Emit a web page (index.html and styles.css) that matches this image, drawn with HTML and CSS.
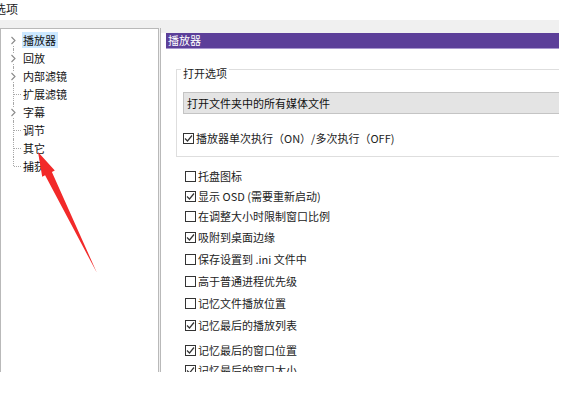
FILE: index.html
```html
<!DOCTYPE html>
<html lang="zh">
<head>
<meta charset="utf-8">
<title>选项</title>
<link rel="stylesheet" href="styles.css">
</head>
<body>
<div class="title">选项</div>
<div class="main">
  <div class="tree">
    <div class="row"><span class="gut first"><svg class="chev" width="7" height="9" viewBox="0 0 7 9"><polyline points="1.5,1 5,4.5 1.5,8" /></svg></span><span class="lbl sel">播放器</span></div>
    <div class="row"><span class="gut"><svg class="chev" width="7" height="9" viewBox="0 0 7 9"><polyline points="1.5,1 5,4.5 1.5,8" /></svg></span><span class="lbl">回放</span></div>
    <div class="row"><span class="gut"><svg class="chev" width="7" height="9" viewBox="0 0 7 9"><polyline points="1.5,1 5,4.5 1.5,8" /></svg></span><span class="lbl">内部滤镜</span></div>
    <div class="row"><span class="gut leaf"></span><span class="lbl">扩展滤镜</span></div>
    <div class="row"><span class="gut"><svg class="chev" width="7" height="9" viewBox="0 0 7 9"><polyline points="1.5,1 5,4.5 1.5,8" /></svg></span><span class="lbl">字幕</span></div>
    <div class="row"><span class="gut leaf"></span><span class="lbl">调节</span></div>
    <div class="row"><span class="gut leaf"></span><span class="lbl">其它</span></div>
    <div class="row"><span class="gut leaf last"></span><span class="lbl">捕获</span></div>
  </div>
  <div class="pane">
    <div class="pane-gap"></div>
    <div class="hdr">播放器</div>
    <div class="group">
      <div class="legend">打开选项</div>
      <div class="combo">打开文件夹中的所有媒体文件</div>
      <label class="cb cb-in"><span class="box on"><svg width="9" height="9" viewBox="0 0 9 9"><polyline points="1,4.5 3.5,7 8,1.5" /></svg></span>播放器单次执行（ON）/多次执行（OFF)</label>
    </div>
    <div class="list">
      <label class="cb g0"><span class="box"></span>托盘图标</label>
      <label class="cb g4"><span class="box on"><svg width="9" height="9" viewBox="0 0 9 9"><polyline points="1,4.5 3.5,7 8,1.5" /></svg></span>显示 OSD (需要重新启动)</label>
      <label class="cb g4"><span class="box"></span>在调整大小时限制窗口比例</label>
      <label class="cb g5"><span class="box on"><svg width="9" height="9" viewBox="0 0 9 9"><polyline points="1,4.5 3.5,7 8,1.5" /></svg></span>吸附到桌面边缘</label>
      <label class="cb g6"><span class="box"></span>保存设置到 .ini 文件中</label>
      <label class="cb g6"><span class="box"></span>高于普通进程优先级</label>
      <label class="cb g6"><span class="box"></span>记忆文件播放位置</label>
      <label class="cb g6"><span class="box on"><svg width="9" height="9" viewBox="0 0 9 9"><polyline points="1,4.5 3.5,7 8,1.5" /></svg></span>记忆最后的播放列表</label>
      <label class="cb g9"><span class="box on"><svg width="9" height="9" viewBox="0 0 9 9"><polyline points="1,4.5 3.5,7 8,1.5" /></svg></span>记忆最后的窗口位置</label>
      <label class="cb g4"><span class="box on"><svg width="9" height="9" viewBox="0 0 9 9"><polyline points="1,4.5 3.5,7 8,1.5" /></svg></span>记忆最后的窗口大小</label>
    </div>
  </div>
</div>
<svg class="arrow" width="567" height="396" viewBox="0 0 567 396">
  <polygon points="38,152 54.8,170.5 51.9,171.9 97,273 45.1,175.3 42.2,176.7" />
</svg>
</body>
</html>
```
FILE: styles.css
```css
html, body {
  margin: 0;
  padding: 0;
}
body {
  width: 567px;
  height: 396px;
  overflow: hidden;
  background: #fff;
  font-family: "Noto Sans CJK SC", "Noto Sans", sans-serif;
  font-size: 11px;
  color: #111;
  position: relative;
}
.title {
  height: 20px;
  line-height: 17px;
  font-size: 12px;
  margin-left: -6px;
  color: #222;
}
.main {
  display: flex;
  width: 559px;
  height: 352px;
  box-sizing: border-box;
  padding-top: 8px;
  background: #f0f0f0;
}
.tree {
  width: 159px;
  flex: none;
  box-sizing: border-box;
  background: #fff;
  border: 1px solid #b9b9b9;
  border-bottom: none;
  padding-top: 2px;
}
.row {
  display: flex;
  align-items: center;
  height: 18px;
}
.gut {
  position: relative;
  width: 21px;
  height: 100%;
  flex: none;
  display: flex;
  align-items: center;
}
.gut::before {
  content: "";
  position: absolute;
  left: 12px;
  top: 0;
  bottom: 0;
  border-left: 1px dotted #a8a8a8;
}
.gut.first::before { top: 9px; }
.gut.last::before { bottom: 9px; }
.gut.leaf::after {
  content: "";
  position: absolute;
  left: 13px;
  width: 7px;
  top: 9px;
  border-top: 1px dotted #a8a8a8;
}
.chev {
  position: relative;
  margin-left: 9px;
  background: #fff;
}
.chev polyline {
  fill: none;
  stroke: #8a8a8a;
  stroke-width: 1.1;
}
.lbl {
  line-height: 16px;
  padding: 0 1px;
  color: #111;
}
.lbl.sel {
  background: #cce8ff;
  padding: 0 2px 0 1px;
}
.pane {
  flex: 1;
  margin-left: 1px;
  border-left: 1px solid #b9b9b9;
  background: #fff;
  overflow: hidden;
  display: flex;
  flex-direction: column;
}
.pane-gap {
  height: 5px;
  background: #f0f0f0;
  flex: none;
}
.hdr {
  margin-left: 5px;
  height: 15px;
  line-height: 15px;
  background: #5c3f99;
  border-bottom: 1px solid #a897cf;
  color: #fff;
  padding-left: 2px;
  flex: none;
}
.group {
  margin: 20px -20px 0 15px;
  border: 1px solid #dedede;
  padding: 0 0 10px 6px;
  flex: none;
}
.legend {
  margin-top: -4px;
  margin-left: -2px;
  width: fit-content;
  padding: 0 2px;
  line-height: 14px;
  background: #fff;
  color: #222;
}
.combo {
  margin-top: 12px;
  height: 22px;
  box-sizing: border-box;
  background: #e4e4e4;
  border: 1px solid #c4c4c4;
  border-right: none;
  line-height: 20px;
  padding-left: 3px;
  color: #111;
}
.cb {
  display: flex;
  align-items: center;
  height: 16px;
  color: #222;
  white-space: nowrap;
}
.cb-in { margin-top: 16px; }
.box {
  width: 11px;
  height: 11px;
  box-sizing: border-box;
  border: 1px solid #333;
  margin-right: 2px;
  flex: none;
  display: flex;
  align-items: center;
  justify-content: center;
  background: #fff;
}
.box polyline {
  fill: none;
  stroke: #333;
  stroke-width: 1.2;
}
.list {
  margin-left: 24px;
  margin-top: 11px;
}
.g0 { margin-top: 0; }
.g4 { margin-top: 4px; }
.g5 { margin-top: 5px; }
.g6 { margin-top: 6px; }
.g9 { margin-top: 9px; }
.arrow {
  position: absolute;
  left: 0;
  top: 0;
  pointer-events: none;
}
.arrow polygon {
  fill: #f22a2a;
}
```
